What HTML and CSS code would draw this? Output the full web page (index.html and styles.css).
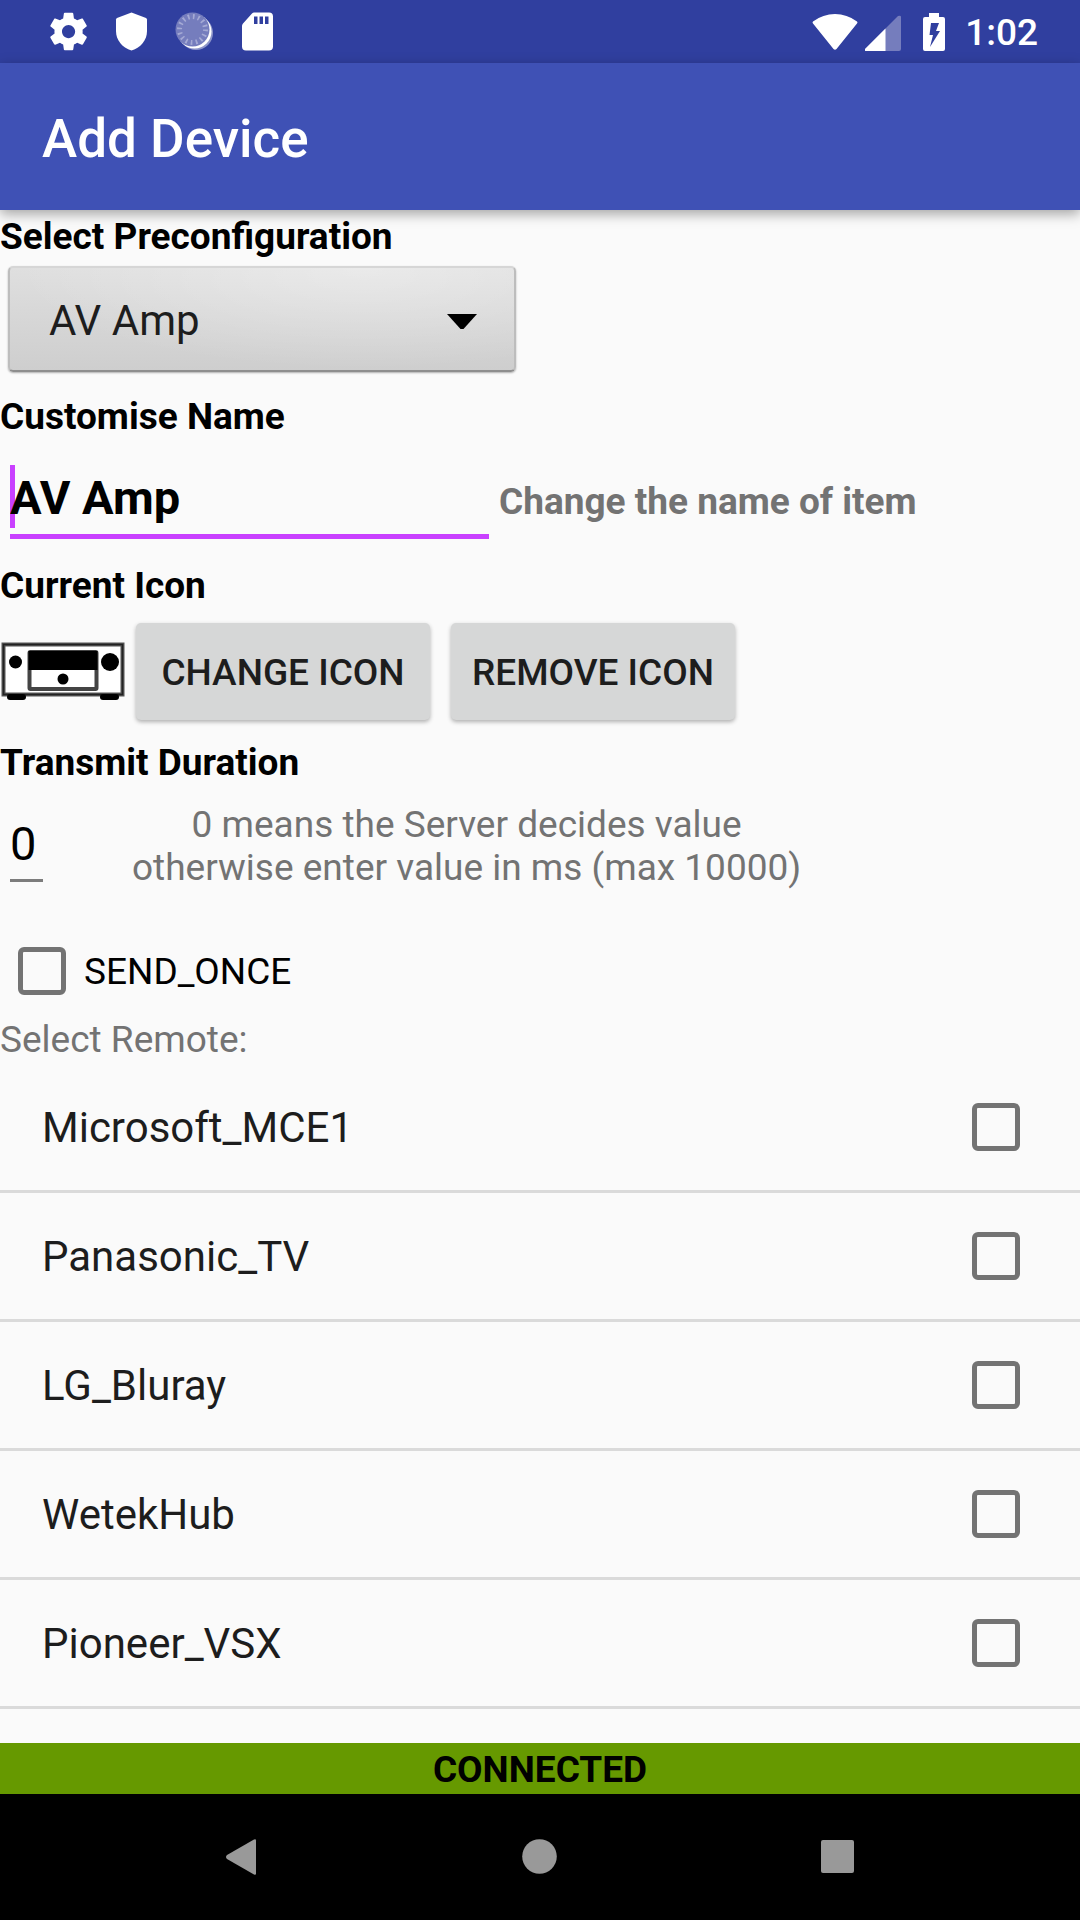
FILE: index.html
```html
<!DOCTYPE html>
<html lang="en">
<head>
<meta charset="utf-8">
<meta name="viewport" content="width=device-width">
<title>Add Device</title>
<link rel="stylesheet" href="styles.css">
</head>
<body>
<div class="screen">
  <div class="status-bar">
    <div class="status-icons">
      <svg class="status-icon" viewBox="0 0 63 63" aria-hidden="true"><path transform="translate(9 9) scale(1.88)" fill="#fff" d="M19.43 12.98c.04-.32.07-.64.07-.98s-.03-.66-.07-.98l2.11-1.65c.19-.15.24-.42.12-.64l-2-3.46c-.12-.22-.39-.3-.61-.22l-2.49 1c-.52-.4-1.08-.73-1.69-.98l-.38-2.650C14.460 2.180 14.250 2 14 2h-4c-.25 0-.46.18-.49.42l-.38 2.650c-.61.25-1.170.59-1.690.98l-2.490-1c-.23-.09-.49 0-.61.22l-2 3.460c-.13.22-.07.49.12.64l2.110 1.650c-.04.32-.07.65-.07.98s.03.66.07.98l-2.110 1.650c-.19.15-.24.42-.12.64l2 3.460c.12.22.39.3.61.22l2.490-1c.52.4 1.080.73 1.690.98l.38 2.650c.03.24.24.42.49.42h4c.25 0 .46-.18.49-.42l.38-2.650c.61-.25 1.170-.59 1.690-.98l2.490 1c.23.09.49 0 .61-.22l2-3.460c.12-.22.07-.49-.12-.64l-2.110-1.650zM12 15.500c-1.930 0-3.500-1.570-3.500-3.500s1.570-3.500 3.500-3.500 3.500 1.570 3.500 3.500-1.570 3.500-3.500 3.500z"/></svg>
      <svg class="status-icon" viewBox="0 0 63 63" aria-hidden="true"><path fill="#fff" d="M31.500 12.500L46 18q1 .5 1 1.500V31c0 9-6 16.500-15.500 19.500C22 47.500 16 40 16 31V19.500q0-1 1-1.500z"/></svg>
      <svg class="status-icon" viewBox="0 0 63 63" aria-hidden="true">
        <circle cx="33" cy="33" r="17" fill="#fff" opacity=".45"/>
        <circle cx="31.500" cy="31.500" r="17" fill="#fff"/>
        <circle cx="29.500" cy="29.500" r="17" fill="#757dbd"/>
        <circle cx="29.500" cy="29.500" r="13" fill="none" stroke="#a5aad5" stroke-width="5" stroke-dasharray="1.700 3.405"/>
      </svg>
      <svg class="status-icon" viewBox="0 0 63 63" aria-hidden="true"><path fill="#fff" fill-rule="evenodd" d="M28 12.500h15q4 0 4 4v30q0 4-4 4H20q-4 0-4-4V26q0-1.500 1-2.500L26 13.500q1-1 2-1zM28 16.500V24h3.500v-7.500zM33.500 16.500V24H37v-7.500zM39 16.500V24h3.500v-7.500z"/></svg>
    </div>
    <div class="status-system">
      <svg class="wifi" viewBox="0 0 46 38" aria-hidden="true"><path fill="#fff" d="M23 1Q35 1 45 8.500q1 1 0 2L24.500 36q-1.500 1.500-3 0L1 10.500q-1-1 0-2Q11 1 23 1z"/></svg>
      <svg class="signal" viewBox="0 0 36 38" aria-hidden="true"><path fill="#757dbd" d="M0 36L33 3q3-1 3 1v32q0 2-2 2H1q-2 0-1-2z"/><path fill="#fff" d="M0 36L20.500 15.500V38H1q-2 0-1-2z"/></svg>
      <svg class="battery" viewBox="0 0 22 38" aria-hidden="true"><path fill="#fff" fill-rule="evenodd" d="M6 0h10v4h4q2 0 2 2v30q0 2-2 2H2q-2 0-2-2V6q0-2 2-2h4zM8 10L6.500 22H10L7 34 17 18h-4l3-8z"/></svg>
      <time class="clock">1:02</time>
    </div>
  </div>
  <header class="app-bar"><h1 class="title">Add Device</h1></header>
  <main class="content">
    <form class="form">
      <label class="heading" for="preset">Select Preconfiguration</label>
      <div class="spinner">
        <select class="spinner-select" id="preset"><option>AV Amp</option></select>
        <svg class="spinner-arrow" viewBox="0 0 32 17" aria-hidden="true"><path d="M1 1h30L17.500 16h-3z"/></svg>
      </div>
      <label class="heading" for="name">Customise Name</label>
      <div class="name-row">
        <div class="name-field">
          <input class="name-input" id="name" type="text" value="AV Amp">
          <span class="caret"></span>
        </div>
        <span class="name-hint">Change the name of item</span>
      </div>
      <h2 class="heading">Current Icon</h2>
      <div class="icon-row">
        <svg class="device-icon" viewBox="0 0 126 60" role="img" aria-label="AV amplifier">
          <rect x="3.500" y="2.500" width="119" height="50" fill="#fff" stroke="#555" stroke-width="4"/>
          <path stroke="#222" stroke-width="1.500" fill="none" d="M3.500 2.500h119v50h-119z"/>
          <rect x="7" y="52" width="19" height="6" rx="3"/><rect x="100" y="52" width="19" height="6" rx="3"/>
          <rect x="29.500" y="10" width="67" height="37" rx="1" fill="#fff" stroke="#444" stroke-width="4"/>
          <path d="M28.500 9h69v19h-69z"/>
          <circle cx="15.500" cy="20" r="6.500"/><circle cx="110" cy="20" r="9"/><circle cx="63" cy="37" r="5.500"/>
        </svg>
        <button class="button change" type="button">CHANGE ICON</button>
        <button class="button remove" type="button">REMOVE ICON</button>
      </div>
      <label class="heading" for="duration">Transmit Duration</label>
      <div class="duration-row">
        <input class="duration-input" id="duration" type="text" inputmode="numeric" value="0">
        <p class="duration-hint">0 means the Server decides value<br>otherwise enter value in ms (max 10000)</p>
      </div>
      <label class="once"><input class="checkbox" type="checkbox"><span class="once-text">SEND_ONCE</span></label>
      <h2 class="heading list-title">Select Remote:</h2>
      <ul class="remotes">
        <li><label class="remote">Microsoft_MCE1<input class="checkbox" type="checkbox"></label></li>
        <li><label class="remote">Panasonic_TV<input class="checkbox" type="checkbox"></label></li>
        <li><label class="remote">LG_Bluray<input class="checkbox" type="checkbox"></label></li>
        <li><label class="remote">WetekHub<input class="checkbox" type="checkbox"></label></li>
        <li><label class="remote">Pioneer_VSX<input class="checkbox" type="checkbox"></label></li>
      </ul>
    </form>
  </main>
  <div class="connection" role="status">CONNECTED</div>
  <nav class="nav-bar">
    <button class="nav-button" type="button" aria-label="Back"><svg class="nav-icon" viewBox="0 0 40 40"><path d="M34 3.500v33q0 2-2 1L5 22q-2-2 0-4L32 2.500q2-1 2 1z"/></svg></button>
    <button class="nav-button" type="button" aria-label="Home"><svg class="nav-icon" viewBox="0 0 40 40"><circle cx="19.500" cy="19.500" r="17.300"/></svg></button>
    <button class="nav-button" type="button" aria-label="Recent apps"><svg class="nav-icon" viewBox="0 0 40 40"><rect x="3" y="3" width="33" height="33" rx="2"/></svg></button>
  </nav>
</div>
</body>
</html>
```
FILE: styles.css
```css
* { box-sizing: border-box; }

body {
  margin: 0;
  background: #fafafa;
  color: #000;
  font: 37px/49px Roboto, "Noto Sans", sans-serif;
}

h1, h2, p, ul { margin: 0; padding: 0; }
ul { list-style: none; }
svg { display: block; flex: none; }
input, select, button { font: inherit; margin: 0; }

.screen {
  display: flex;
  flex-direction: column;
  min-height: 100vh;
}

/* System status bar */
.status-bar {
  display: flex;
  justify-content: space-between;
  height: 63px;
  padding: 0 42px 0 37px;
  background: #303f9f;
  color: #fff;
}
.status-icons, .status-system { display: flex; }
.status-system { align-items: center; }
.status-icon { width: 63px; height: 63px; }
.wifi { width: 46px; height: 38px; margin-right: 7px; }
.signal { width: 36px; height: 38px; margin-right: 22px; }
.battery { width: 22px; height: 38px; margin-right: 20px; }
.clock { font-weight: 500; padding-top: 2px; }

/* App bar */
.app-bar {
  display: flex;
  align-items: center;
  height: 147px;
  padding: 4px 42px 0;
  background: #3f51b5;
  color: #fff;
  box-shadow: 0 4px 12px rgba(0, 0, 0, .35);
}
.title { font-size: 53px; font-weight: 500; line-height: 62px; }

/* Form */
.content { flex: 1; }
.form { display: flex; flex-direction: column; }
.heading { padding-top: 2px; font-size: 37px; font-weight: 700; }

.spinner {
  position: relative;
  width: 508px;
  margin: 5px 0 18px 8px;
}
.spinner-select {
  appearance: none;
  display: block;
  width: 100%;
  height: 106px;
  padding: 2px 80px 0 39px;
  border: 2px solid #bdbdbd;
  border-top-color: #d6d6d6;
  border-bottom-color: #8e8e8e;
  border-radius: 5px;
  background: radial-gradient(ellipse at 70% 0, rgba(255, 255, 255, .35), rgba(255, 255, 255, 0) 70%), linear-gradient(#dfdfdf, #cecece);
  box-shadow: 0 1px 2px rgba(0, 0, 0, .3);
  color: #1d1d1d;
  font-size: 42px;
}
.spinner-arrow {
  position: absolute;
  top: 47px;
  right: 38px;
  width: 32px;
  height: 17px;
  pointer-events: none;
}

.name-row {
  display: flex;
  align-items: baseline;
  gap: 10px;
  padding: 24px 0 20px 10px;
}
.name-field { position: relative; width: 479px; }
.name-input {
  display: block;
  width: 100%;
  height: 74px;
  padding: 0 0 4px;
  border: 0;
  border-bottom: 5px solid #c940ff;
  outline: 0;
  background: none;
  font-size: 47px;
  font-weight: 700;
}
.caret {
  position: absolute;
  z-index: -1;
  top: 0;
  left: 0;
  width: 5px;
  height: 63px;
  background: #c940ff;
}
.name-hint { color: #737373; font-weight: 700; }

.icon-row { display: flex; align-items: center; padding: 13px 0 16px; }
.device-icon { width: 126px; height: 60px; margin-right: 10px; }
.button {
  height: 97px;
  padding: 2px 0 0;
  border: 0;
  border-radius: 5px;
  background: #d6d7d7;
  box-shadow: 0 2px 4px rgba(0, 0, 0, .3);
  color: #1d1d1d;
  font-weight: 500;
}
.change { width: 294px; margin-right: 21px; }
.remove { width: 284px; }

.duration-row { display: flex; align-items: flex-start; padding: 16px 0 56px 10px; }
.duration-input {
  width: 33px;
  height: 79px;
  padding: 5px 0 0;
  border: 0;
  border-bottom: 3px solid #7c7c7c;
  outline: 0;
  background: none;
  font-size: 47px;
}
.duration-hint {
  margin-left: 89px;
  color: #737373;
  line-height: 43px;
  text-align: center;
}

.checkbox {
  appearance: none;
  flex: none;
  width: 48px;
  height: 48px;
  border: 5px solid #737373;
  border-radius: 6px;
}
.once {
  display: flex;
  align-items: center;
  gap: 18px;
  padding: 0 18px 17px;
}
.once-text { padding-top: 2px; }
.list-title { color: #737373; font-weight: 400; }
.remote {
  display: flex;
  align-items: center;
  justify-content: space-between;
  height: 129px;
  padding: 0 60px 0 42px;
  border-bottom: 3px solid #dadada;
  color: #1d1d1d;
  font-size: 42px;
}

/* Connection state and system navigation */
.connection {
  padding-top: 2px;
  background: #669900;
  font-weight: 700;
  text-align: center;
}
.nav-bar {
  display: flex;
  justify-content: center;
  gap: 48px;
  height: 126px;
  background: #000;
}
.nav-button {
  display: flex;
  align-items: center;
  justify-content: center;
  width: 250px;
  padding: 0;
  border: 0;
  background: none;
}
.nav-icon { width: 40px; height: 40px; fill: #999; }
```
